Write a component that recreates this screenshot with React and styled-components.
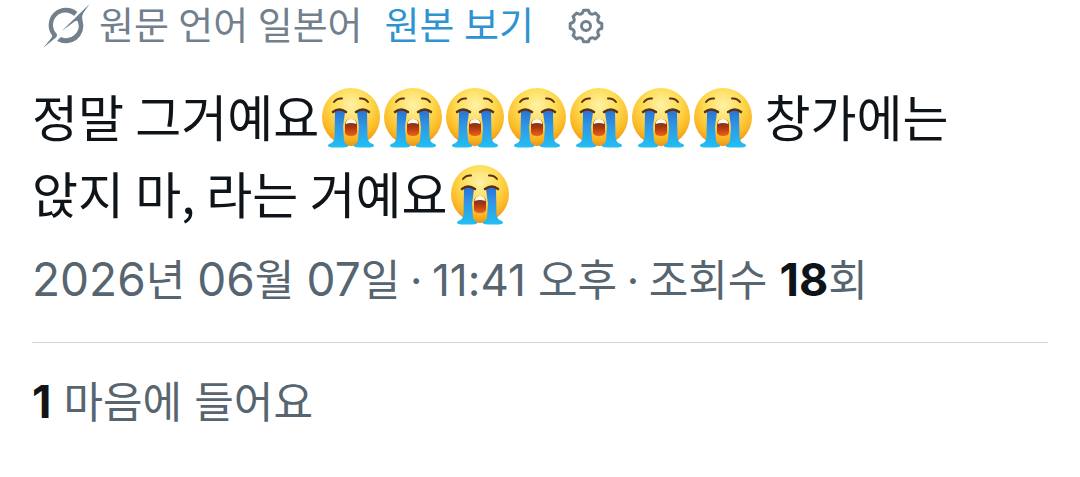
import React from 'react'
import styled, { createGlobalStyle } from 'styled-components'

const SOBS = 7

const App = () => (
    <>
        <GlobalStyle />
        <EmojiPaint />
        <Post>
            <Translation>
                <GrokIcon />
                <Source>원문 언어 일본어</Source>
                <ShowOriginal href="#original">원본 보기</ShowOriginal>
                <Settings type="button" aria-label="번역 설정">
                    <GearIcon />
                </Settings>
            </Translation>

            <Body>
                정말 그거예요
                {Array.from({ length: SOBS }, (_, idx) => <Sob key={idx} />)}
                {' 창가에는 '}
                {'앉지 마, 라는 거예요'}
                <Sob />
            </Body>

            <Meta>
                <time dateTime="2026-06-07T23:41">
                    <Num $size={46}>2026</Num>년 <Num $size={46}>06</Num>월 <Num $size={46}>07</Num>일
                    <Separator />
                    <Num $size={44}>11:41</Num> 오후
                </time>
                <Separator />
                조회수 <Count>18</Count>회
            </Meta>

            <Likes>
                <Count>1</Count> 마음에 들어요
            </Likes>
        </Post>
    </>
)

const Separator = () => <Sep>{' '}<Dot>·</Dot>{' '}</Sep>

const GrokIcon = () => (
    <Grok viewBox="6 4 144 138" aria-hidden="true">
        <path d="M112 31A52 52 0 0 0 36 101Q37 105 34 109L10 138L47 108Q53 103 50 96A37 37 0 0 1 102 43Z" />
        <path d="M148 8L65 88L106 58Q112 55 114 61A37 37 0 0 1 63 106L51 117A52 52 0 0 0 128 58Q124 44 130 34Z" />
    </Grok>
)

const polar = (deg, r) => {
    const a = (deg * Math.PI) / 180
    return `${18 + r * Math.sin(a)} ${18 + r * Math.cos(a)}`
}

// eight teeth with soft valleys between them
const gearPath = 'M' + Array.from({ length: 8 }, (_, k) => {
    const mid = k * 45
    return `${polar(mid - 9, 16)}L${polar(mid + 9, 16)}Q${polar(mid + 14, 13)} ${polar(mid + 22.5, 13)}Q${polar(mid + 31, 13)} ${polar(mid + 36, 16)}`
}).join('L') + 'Z'

const GearIcon = () => (
    <Gear viewBox="0 0 36 36" aria-hidden="true">
        <path d={gearPath} />
        <circle cx="18" cy="18" r="4.500" />
    </Gear>
)

const EmojiPaint = () => (
    <Paint aria-hidden="true">
        <defs>
            <radialGradient id="skin" cx="50%" cy="30%" r="70%">
                <stop offset="0" stopColor="#fff2a8" />
                <stop offset="0.450" stopColor="#fedc55" />
                <stop offset="0.800" stopColor="#fbb823" />
                <stop offset="1" stopColor="#ec9412" />
            </radialGradient>
            <linearGradient id="tear" x1="0" y1="0" x2="0" y2="1">
                <stop offset="0" stopColor="#2a6fd0" />
                <stop offset="0.400" stopColor="#2f95e6" />
                <stop offset="1" stopColor="#22bff2" />
            </linearGradient>
            <linearGradient id="mouth" x1="0" y1="0" x2="0" y2="1">
                <stop offset="0" stopColor="#6e2a12" />
                <stop offset="0.500" stopColor="#a8380f" />
                <stop offset="1" stopColor="#f0601c" />
            </linearGradient>
        </defs>
    </Paint>
)

const Sob = () => (
    <Emoji viewBox="0 0 60 62" role="img" aria-label="큰 소리로 우는 얼굴">
        <circle cx="30" cy="30" r="29" fill="url(#skin)" />
        <path d="M14 24Q18 21 24 25L22 40L23 53Q23 56 27 58Q28 60.500 22 60.500H11Q5 60 8 57Q13 56 13.500 50Z" fill="url(#tear)" />
        <path d="M46 24Q42 21 36 25L38 40L37 53Q37 56 33 58Q32 60.500 38 60.500H49Q55 60 52 57Q47 56 46.500 50Z" fill="url(#tear)" />
        <path d="M13 15Q16 11 21 11.500M47 15Q44 11 39 11.500" fill="none" stroke="#5c3015" strokeWidth="2" strokeLinecap="round" />
        <path d="M12 25Q18 20 25 25M48 25Q42 20 35 25" fill="none" stroke="#5c3015" strokeWidth="2.500" strokeLinecap="round" />
        <path d="M24 38Q24 32 30 32Q36 32 36 38V45Q36 49 30 49Q24 49 24 45Z" fill="url(#mouth)" />
        <path d="M24.500 37Q25 32 30 32Q35 32 35.500 37Q30 35 24.500 37Z" fill="#fffaf0" />
    </Emoji>
)

const GlobalStyle = createGlobalStyle`
    body{
        margin:0;
        background:#fff;
        color:#0f1419;
        font-family: Inter, 'Noto Sans CJK KR', sans-serif;
    }
`

const Post = styled.article`
    padding: 0 32px;
`

const Translation = styled.div`
    display:flex;
    align-items:center;
    height:52px;
    padding-left:10px;
    font-family: Roboto, 'Noto Sans CJK KR', sans-serif;
    font-size:38px;
    line-height:52px;
    color:#71808c;
    white-space:nowrap;
`

const Source = styled.span`
    margin-left:9px;
`

const ShowOriginal = styled.a`
    margin-left:22px;
    color:#2e93cf;
    text-decoration:none;
`

const Settings = styled.button`
    display:flex;
    margin-left:34px;
    padding:0;
    border:0;
    background:none;
    color:inherit;
    cursor:pointer;
`

const Grok = styled.svg`
    width:48px;
    height:46px;
    fill:currentColor;
`

const Gear = styled.svg`
    width:36px;
    height:36px;
    fill:none;
    stroke:currentColor;
    stroke-width:3;
    stroke-linejoin:round;
`

const Paint = styled.svg`
    position:absolute;
    width:0;
    height:0;
`

const Body = styled.p`
    margin: 25px 0 0;
    font-family: 'Noto Sans CJK KR', sans-serif;
    font-size:50px;
    line-height:77px;
    word-break:keep-all;
`

const Emoji = styled.svg`
    width:60px;
    height:62px;
    margin-left:2px;
    vertical-align:-12px;
`

const Meta = styled.div`
    margin-top:16px;
    font-size:43px;
    line-height:60px;
    color:#566570;
`

const Num = styled.span`
    font-size:${(p) => p.$size}px;
`

const Sep = styled.span`
    font-family: 'Noto Sans CJK KR', sans-serif;
`

const Dot = styled.span`
    font-family: Inter, sans-serif;
`

const Count = styled.strong`
    font-weight:700;
    font-size:45px;
    color:#0f1419;
`

const Likes = styled.div`
    margin-top:32px;
    padding-top:29px;
    border-top:1px solid #cfd9de;
    font-size:43px;
    line-height:60px;
    color:#566570;
`

export default App
